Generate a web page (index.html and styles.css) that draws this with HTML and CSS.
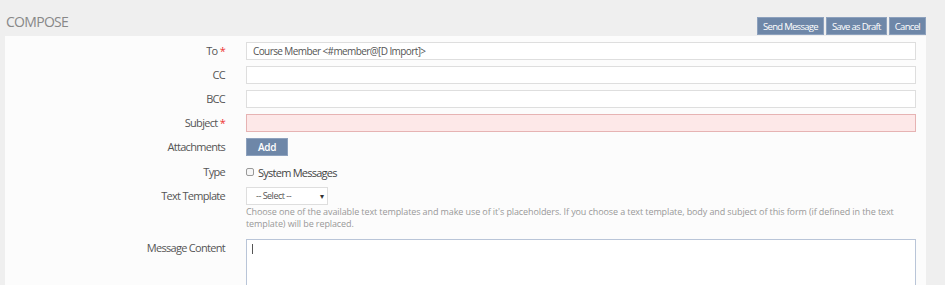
FILE: index.html
```html
<!DOCTYPE html>
<html lang="en">
<head>
  <meta charset="UTF-8">
  <title>Compose</title>
  <link rel="stylesheet" href="styles.css">
</head>
<body>
  <div class="compose">
    <div class="topbar">
      <h1>Compose</h1>
      <div class="actions">
        <button class="btn">Send Message</button>
        <button class="btn">Save as Draft</button>
        <button class="btn">Cancel</button>
      </div>
    </div>

    <div class="panel">
      <div class="row">
        <label>To <span class="req">*</span></label>
        <div class="field"><input type="text" value="Course Member <#member@[D Import]>"></div>
      </div>
      <div class="row">
        <label>CC</label>
        <div class="field"><input type="text"></div>
      </div>
      <div class="row">
        <label>BCC</label>
        <div class="field"><input type="text"></div>
      </div>
      <div class="row">
        <label>Subject <span class="req">*</span></label>
        <div class="field"><input type="text" class="invalid"></div>
      </div>
      <div class="row">
        <label>Attachments</label>
        <div class="field"><button class="btn btn-add">Add</button></div>
      </div>
      <div class="row row-type">
        <label>Type</label>
        <div class="field check"><span class="box"></span>System Messages</div>
      </div>
      <div class="row row-template">
        <label>Text Template</label>
        <div class="field">
          <div class="select">-- Select --<span class="arrow">&#9662;</span></div>
          <p class="help">Choose one of the available text templates and make use of it's placeholders. If you choose a text template, body and subject of this form (if defined in the text template) will be replaced.</p>
        </div>
      </div>
      <div class="row row-content">
        <label>Message Content</label>
        <div class="field"><div class="textarea"><span class="caret"></span></div></div>
      </div>
    </div>
  </div>
</body>
</html>
```

FILE: styles.css
```css
body {
  margin: 0;
  background: #efefef;
  font-family: 'Open Sans', sans-serif;
  color: #555;
}

.compose {
  padding: 0 19px 0 5px;
}

.topbar {
  display: flex;
  align-items: flex-end;
  height: 36px;
}

.topbar h1 {
  margin: 0 0 5px 1px;
  font-size: 14px;
  font-weight: 400;
  text-transform: uppercase;
  letter-spacing: -0.7px;
  color: #888;
  line-height: 18px;
}

.actions {
  margin-left: auto;
  display: flex;
  gap: 2px;
  margin-bottom: 1px;
}

.btn {
  height: 18px;
  padding: 0 5px;
  border: 1px solid #8da1bd;
  background: #6e87a8;
  color: #fff;
  font-family: 'Open Sans', sans-serif;
  font-size: 9.5px;
  letter-spacing: -0.7px;
  cursor: pointer;
}

.panel {
  background: #fcfcfc;
  padding: 6px 10px 0 0;
  height: 249px;
  overflow: hidden;
}

.row {
  display: flex;
  margin-bottom: 6px;
}

.row label {
  width: 220px;
  flex: none;
  margin-right: 21px;
  text-align: right;
  font-size: 11px;
  letter-spacing: -0.7px;
  line-height: 18px;
  color: #555;
}

.req {
  color: #e33;
}

.field {
  flex: 1;
}

input {
  display: block;
  box-sizing: border-box;
  width: 100%;
  height: 18px;
  border: 1px solid #dedede;
  background: #fff;
  padding: 0 6px;
  font-family: 'Open Sans', sans-serif;
  font-size: 10px;
  letter-spacing: -0.6px;
  color: #555;
}

input.invalid {
  background: #fde8e8;
  border-color: #e6b3b3;
}

.btn-add {
  display: block;
  width: 42px;
  font-size: 10px;
  font-weight: 600;
  letter-spacing: -0.3px;
}

.row-type {
  height: 20px;
  margin-bottom: 5px;
}

.row-type label {
  line-height: 20px;
}

.check {
  display: flex;
  align-items: center;
  font-size: 11px;
  letter-spacing: -0.75px;
  color: #444;
}

.box {
  width: 6px;
  height: 6px;
  border: 1px solid #999;
  border-radius: 2px;
  background: #f6f6f6;
  margin-right: 4px;
}

.row-template {
  margin-bottom: 9px;
}

.select {
  box-sizing: border-box;
  width: 82px;
  height: 18px;
  border: 1px solid #dedede;
  background: #fff;
  padding: 0 0 0 9px;
  font-size: 9px;
  letter-spacing: -0.5px;
  line-height: 16px;
  color: #555;
  position: relative;
}

.arrow {
  position: absolute;
  right: 4px;
  top: 0;
  font-size: 8px;
  color: #333;
}

.help {
  margin: 1px 0 0;
  font-size: 9px;
  line-height: 12px;
  letter-spacing: -0.1px;
  color: #999;
}

.textarea {
  box-sizing: border-box;
  height: 80px;
  border: 1px solid #b9c5d8;
  background: #fff;
  padding: 4px 5px;
}

.caret {
  display: block;
  width: 1px;
  height: 10px;
  background: #555;
}
```
